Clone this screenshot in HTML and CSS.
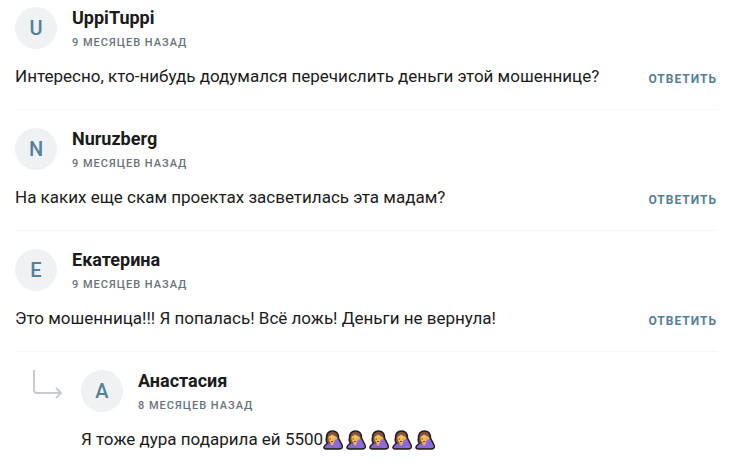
FILE: index.html
```
<!DOCTYPE html>
<html lang="ru">
<head>
<meta charset="utf-8">
<title>Комментарии</title>
<link rel="stylesheet" href="styles.css">
</head>
<body>
<svg class="defs" aria-hidden="true">
  <symbol id="facepalm" viewBox="0 0 20 20">
    <path d="M3 19C0.500 19 0.500 17 2 15.500L4.500 13C2.800 12 3 10 3.500 8C3.500 3.500 6 1 9.500 1C13.500 1 15.500 4 15.500 8L19 15C20 17.500 18.500 19 16 19Z" fill="#80543d" stroke="#221c28" stroke-width="1.500" stroke-linejoin="round"/>
    <path d="M2 18C2 15.500 4 14 7 13.500H12L15 18Z" fill="#8767cf"/>
    <path d="M7.500 12H11V14L9 16L7.500 14Z" fill="#e9ae55"/>
    <path d="M5.500 7L9 4.500L13.500 7C14 10.500 12 13 9.500 13C6.800 13 5.300 10.500 5.500 7Z" fill="#f4bd58"/>
    <path d="M6.500 9H8M8 11.500H10" stroke="#70402d" fill="none"/>
    <path d="M9 9L13.500 7L14.500 9L12 11Z" fill="#eab04d"/>
    <path d="M11 11L14.500 8.500L18.500 16Q19 18 17 18H12L10.500 15Z" fill="#8d6bdb"/>
  </symbol>
</svg>
<main class="comments">
  <article class="comment">
    <header class="head">
      <span class="avatar">U</span>
      <div><h3 class="name">UppiTuppi</h3><time class="date">9 месяцев назад</time></div>
    </header>
    <div class="body"><p class="text">Интересно, кто-нибудь додумался перечислить деньги этой мошеннице?</p><button class="reply" type="button">Ответить</button></div>
  </article>
  <article class="comment">
    <header class="head">
      <span class="avatar">N</span>
      <div><h3 class="name">Nuruzberg</h3><time class="date">9 месяцев назад</time></div>
    </header>
    <div class="body"><p class="text">На каких еще скам проектах засветилась эта мадам?</p><button class="reply" type="button">Ответить</button></div>
  </article>
  <article class="comment">
    <header class="head">
      <span class="avatar">E</span>
      <div><h3 class="name">Екатерина</h3><time class="date">9 месяцев назад</time></div>
    </header>
    <div class="body"><p class="text">Это мошенница!!! Я попалась! Всё ложь! Деньги не вернула!</p><button class="reply" type="button">Ответить</button></div>
  </article>
  <div class="thread">
    <svg class="branch" viewBox="0 0 30 30" aria-hidden="true"><path d="M1 0V20Q1 23 4 23H28M23 18L28 23L23 28"/></svg>
    <article class="comment">
      <header class="head">
        <span class="avatar">A</span>
        <div><h3 class="name">Анастасия</h3><time class="date">8 месяцев назад</time></div>
      </header>
      <div class="body"><p class="text">Я тоже дура подарила ей 5500<span class="emojis"><svg><use href="#facepalm"/></svg><svg><use href="#facepalm"/></svg><svg><use href="#facepalm"/></svg><svg><use href="#facepalm"/></svg><svg><use href="#facepalm"/></svg></span></p></div>
    </article>
  </div>
</main>
</body>
</html>
```
FILE: styles.css
```
* { box-sizing: border-box; }
body { margin: 0; background: #fff; color: #1b1b1b; font-family: Roboto, "Liberation Sans", sans-serif; }
.defs { position: absolute; width: 0; height: 0; }
.comments { padding: 7px 13px 0 15px; }
.comment { padding-bottom: 20px; margin-bottom: 18px; border-bottom: 1px solid #f7f7f8; }
.head { display: flex; gap: 15px; height: 42px; margin-bottom: 15px; }
.avatar { display: flex; align-items: center; justify-content: center; width: 42px; height: 42px; border-radius: 50%; background: #eff1f3; color: #557f96; font-size: 20px; font-weight: 500; }
.name { margin: 0; font-size: 18px; line-height: 22px; font-weight: 700; }
.date { display: block; margin-top: 7px; color: #67737c; font-size: 11px; line-height: 14px; font-weight: 500; letter-spacing: 1px; text-transform: uppercase; }
.body { display: flex; justify-content: space-between; align-items: flex-end; }
.text { display: flex; align-items: center; margin: 0; font-size: 17px; line-height: 25px; }
.reply { padding: 0; border: 0; background: none; color: #557f96; font: 700 12px/20px Roboto, sans-serif; letter-spacing: 1px; text-transform: uppercase; cursor: pointer; }
.thread { display: flex; gap: 18px; padding-left: 18px; }
.thread .comment { flex: 1; border: 0; margin: 0; padding: 0; }
.branch { width: 30px; height: 30px; fill: none; stroke: #c8ccd0; stroke-width: 2; }
.emojis { display: flex; gap: 3px; }
.emojis svg { width: 20px; height: 20px; }
```
